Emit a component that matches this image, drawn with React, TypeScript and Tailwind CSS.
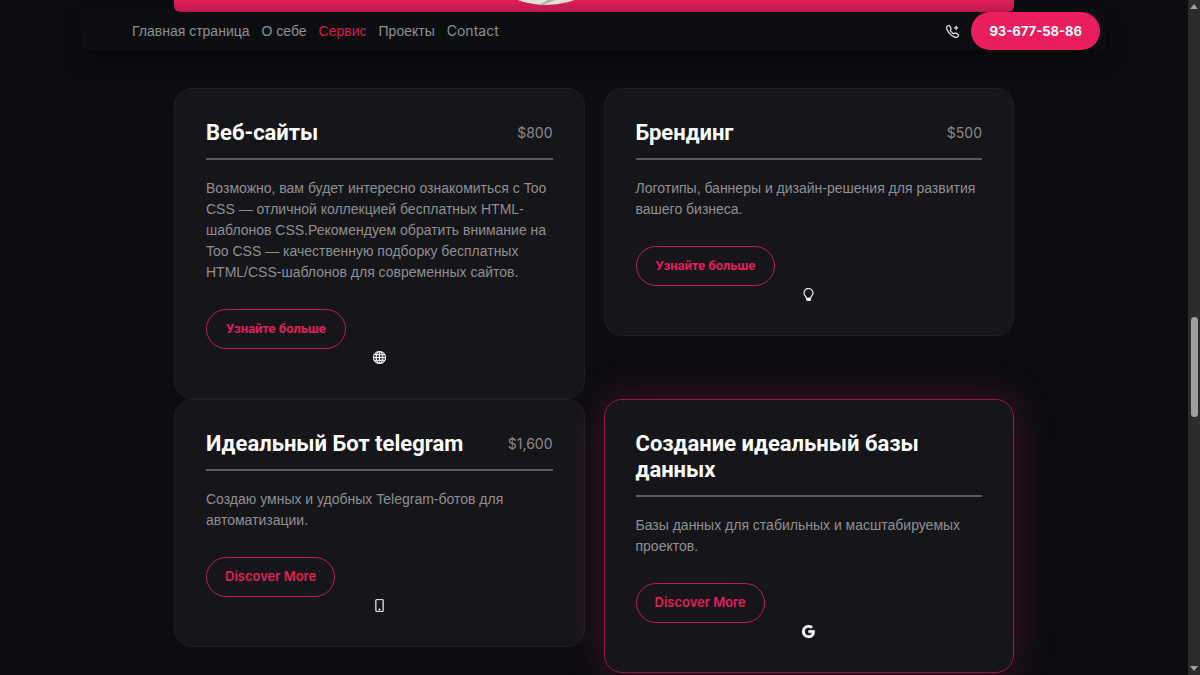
import { BsGlobe, BsGoogle, BsLightbulb, BsPhone, BsTelephonePlus } from "react-icons/bs";
import type { IconType } from "react-icons";

interface Service {
  title: string;
  price?: string;
  text: string;
  action: string;
  icon: IconType;
  latinAction?: boolean;
  highlighted?: boolean;
}

const navLinks = ["Главная страница", "О себе", "Сервис", "Проекты"];

const services: Service[] = [
  {
    title: "Веб-сайты",
    price: "$800",
    text: "Возможно, вам будет интересно ознакомиться с Too CSS — отличной коллекцией бесплатных HTML-шаблонов CSS.Рекомендуем обратить внимание на Too CSS — качественную подборку бесплатных HTML/CSS-шаблонов для современных сайтов.",
    action: "Узнайте больше",
    icon: BsGlobe,
  },
  {
    title: "Брендинг",
    price: "$500",
    text: "Логотипы, баннеры и дизайн-решения для развития вашего бизнеса.",
    action: "Узнайте больше",
    icon: BsLightbulb,
  },
  {
    title: "Идеальный Бот telegram",
    price: "$1,600",
    text: "Создаю умных и удобных Telegram-ботов для автоматизации.",
    action: "Discover More",
    icon: BsPhone,
    latinAction: true,
  },
  {
    title: "Создание идеальный базы данных",
    text: "Базы данных для стабильных и масштабируемых проектов.",
    action: "Discover More",
    icon: BsGoogle,
    latinAction: true,
    highlighted: true,
  },
];

function Header() {
  return (
    <header className="relative mx-auto flex w-full max-w-[1024px] items-center justify-between bg-[#0c0d11] pl-[50px] pr-[6px] shadow-[0_10px_20px_rgba(0,0,0,0.4)]">
      <nav className="flex gap-3 text-[14px] leading-5 text-[#8f8f93]">
        {navLinks.map((label) => (
          <a key={label} href="#" className={label === "Сервис" ? "text-[#cf1c56]" : ""}>
            {label}
          </a>
        ))}
        <a href="#" className="font-['Inter',sans-serif]">
          Contact
        </a>
      </nav>
      <div className="flex items-center gap-3">
        <BsTelephonePlus className="size-[13px] stroke-[0.4] text-white" />
        <a
          href="#"
          className="rounded-full bg-[#e91e5f] px-[18px] py-[9px] font-['Inter',sans-serif] text-[13px] leading-5 font-bold text-white"
        >
          93-677-58-86
        </a>
      </div>
    </header>
  );
}

function ServiceCard({ service }: { service: Service }) {
  const Icon = service.icon;
  return (
    <article
      className={`rounded-[18px] border bg-[#16151a] p-[31px] ${
        service.highlighted
          ? "border-[#8e1c44] shadow-[0_0_40px_rgba(233,30,95,0.25)]"
          : "border-[#202024]"
      }`}
    >
      <div className="flex items-center justify-between border-b-2 border-[#5c5c60] pb-3">
        <h4 className="font-['Roboto',sans-serif] text-[22px] leading-[26px] font-bold text-white">
          {service.title}
        </h4>
        {service.price && (
          <span className="font-['Inter',sans-serif] text-[14px] leading-5 text-[#8a8a8e]">
            {service.price}
          </span>
        )}
      </div>
      <p className="mt-[18px] text-[14px] leading-[21px] text-[#8f8f93]">{service.text}</p>
      <button
        type="button"
        className={`mt-[26px] block h-10 rounded-full border border-[#b5214f] text-[13px] text-[#e01f5b] ${
          service.latinAction
            ? "px-[18px] font-['Inter',sans-serif] font-semibold"
            : "px-[19px] font-['Roboto',sans-serif] font-bold"
        }`}
      >
        {service.action}
      </button>
      <div className="mb-0.5 flex h-4 items-center justify-center text-white">
        <Icon className="size-[13px] stroke-[0.4]" />
      </div>
    </article>
  );
}

function ScrollBar() {
  return (
    <div className="flex w-3 shrink-0 flex-col items-center justify-between bg-[#2c2c2c] py-1">
      <svg viewBox="0 0 8 5" className="h-[5px] w-2 fill-[#a0a0a0]">
        <path d="M4 0 8 5H0z" />
      </svg>
      <div className="mt-[58px] h-[100px] w-[7px] rounded-full bg-[#9f9f9f]" />
      <svg viewBox="0 0 8 5" className="h-[5px] w-2 fill-[#a0a0a0]">
        <path d="M4 5 0 0h8z" />
      </svg>
    </div>
  );
}

export default function App() {
  return (
    <div className="flex h-screen overflow-hidden bg-[#0c0d11] font-['Liberation_Sans',sans-serif]">
      <div className="flex-1 overflow-hidden">
        {/* Bottom edge of the banner above the services */}
        <div className="mx-auto flex h-3 max-w-[840px] justify-center overflow-hidden rounded-b-md bg-gradient-to-b from-[#e01f5b] to-[#c41b50]">
          <svg viewBox="0 0 70 12" className="mr-24 h-3 w-[70px]">
            <ellipse cx="35" cy="-30" rx="55" ry="35" fill="#e4e2e3" />
            <path d="M27 5 37 0h7L32 5z" fill="#b9b4b4" />
          </svg>
        </div>
        <Header />
        <main className="mx-auto mt-[38px] grid max-w-[840px] grid-cols-2 items-start gap-x-[19px]">
          {services.map((service) => (
            <ServiceCard key={service.title} service={service} />
          ))}
        </main>
      </div>
      <ScrollBar />
    </div>
  );
}
